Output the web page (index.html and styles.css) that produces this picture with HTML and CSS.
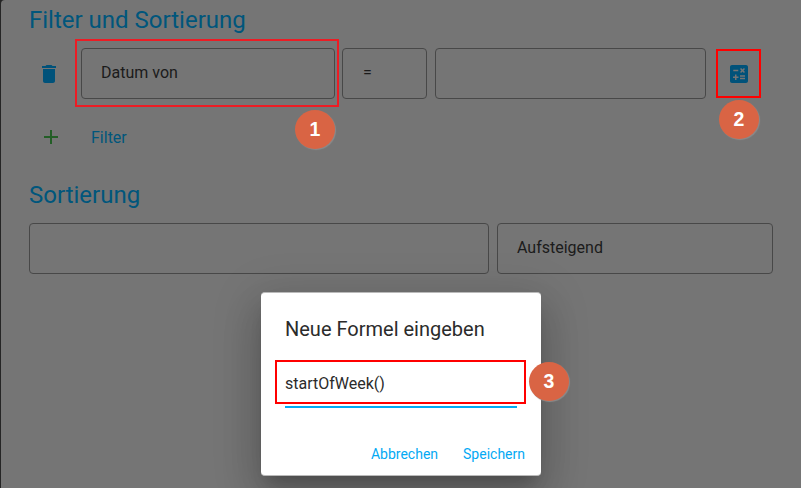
FILE: index.html
```html
<!DOCTYPE html>
<html lang="de">
<head>
<meta charset="utf-8">
<title>Filter und Sortierung</title>
<link rel="stylesheet" href="styles.css">
</head>
<body>
<main class="panel">
  <h2 class="heading">Filter und Sortierung</h2>
  <div class="filter-row">
    <svg class="icon trash" viewBox="0 0 24 24"><path d="M6 19c0 1.100.9 2 2 2h8c1.100 0 2-.9 2-2V7H6v12zM19 4h-3.500l-1-1h-5l-1 1H5v2h14V4z"/></svg>
    <div class="field column">Datum von</div>
    <div class="field operator">=</div>
    <div class="field value"></div>
    <svg class="icon calc" viewBox="0 0 24 24"><path fill-rule="evenodd" d="M19 3H5c-1.100 0-2 .9-2 2v14c0 1.100.9 2 2 2h14c1.100 0 2-.9 2-2V5c0-1.100-.9-2-2-2zM13.030 7.060L14.090 6l1.410 1.410L16.910 6l1.060 1.060-1.410 1.410 1.410 1.410-1.060 1.060-1.410-1.400-1.410 1.410-1.060-1.060 1.410-1.410-1.410-1.420zM6.250 7.720h5v1.500h-5v-1.500zM11.500 16h-2v2H8v-2H6v-1.500h2v-2h1.500v2h2V16zM18 17.250h-5v-1.500h5v1.500zM18 14.750h-5v-1.500h5v1.500z"/></svg>
  </div>
  <div class="add-row">
    <svg class="icon plus" viewBox="0 0 24 24"><path d="M19 13h-6v6h-2v-6H5v-2h6V5h2v6h6v2z"/></svg>
    <span class="add-label">Filter</span>
  </div>
  <h2 class="heading">Sortierung</h2>
  <div class="sort-row">
    <div class="field sort-column"></div>
    <div class="field direction">Aufsteigend</div>
  </div>
</main>

<section class="dialog" role="dialog">
  <h3 class="dialog-title">Neue Formel eingeben</h3>
  <div class="formula">startOfWeek()</div>
  <div class="actions"><span>Abbrechen</span><span>Speichern</span></div>
</section>

<div class="mark mark-1"></div>
<div class="mark mark-2"></div>
<div class="mark mark-3"></div>
<div class="badge badge-1">1</div>
<div class="badge badge-2">2</div>
<div class="badge badge-3">3</div>
</body>
</html>
```
FILE: styles.css
```css
* { box-sizing: border-box; }
body {
  margin: 0;
  height: 488px;
  overflow: hidden;
  position: relative;
  padding-left: 1px;
  background: #252525;
  font-family: Roboto, "Liberation Sans", sans-serif;
  font-size: 16px;
  color: #1b1b1b;
}
.panel {
  height: 488px;
  padding: 4px 28px 0;
  background: #757575;
  border-top-left-radius: 4px;
}
.heading {
  margin: 0;
  font-size: 24px;
  line-height: 32px;
  font-weight: 400;
  color: #00567c;
}
.icon { width: 24px; height: 24px; fill: #00527a; flex: none; }
.filter-row { display: flex; align-items: center; margin-top: 12px; padding-left: 8px; }
.field {
  height: 51px;
  padding: 0 19px;
  border: 1px solid #484848;
  border-radius: 4px;
  line-height: 47px;
}
.column { width: 254px; margin-left: 20px; }
.operator { width: 85px; margin-left: 7px; padding-left: 20px; }
.value { width: 271px; margin-left: 8px; }
.calc { margin-left: 21px; }
.add-row { display: flex; align-items: center; height: 24px; margin-top: 26px; padding-left: 10px; }
.plus { fill: #235e26; }
.add-label { margin-left: 28px; color: #00567c; }
.add-row + .heading { margin-top: 30px; }
.sort-row { display: flex; gap: 8px; margin-top: 12px; }
.sort-column { width: 460px; }
.direction { width: 276px; }

.dialog {
  position: absolute;
  left: 261px;
  top: 292px;
  width: 280px;
  height: 184px;
  padding: 21px 24px 0;
  background: #fff;
  border-radius: 4px;
  border-top: 1px solid #bababa;
  border-bottom: 1px solid #bababa;
  box-shadow: 0 11px 15px -7px rgba(0,0,0,.2), 0 24px 38px 3px rgba(0,0,0,.14), 0 9px 46px 8px rgba(0,0,0,.12);
}
.dialog-title {
  margin: 0 0 15px;
  font-size: 20px;
  line-height: 30px;
  font-weight: 400;
  color: #2b2b2b;
  white-space: nowrap;
}
.formula {
  height: 49px;
  line-height: 50px;
  border-bottom: 2px solid #03a9f4;
  color: #2b2b2b;
}
.actions {
  display: flex;
  justify-content: flex-end;
  gap: 25px;
  margin: 35px -8px 0 0;
  font-size: 14px;
  line-height: 22px;
  color: #03a9f4;
}

.mark { position: absolute; border: 2px solid #f00; }
.mark-1 { left: 75px; top: 39px; width: 264px; height: 68px; border-color: #ed1c24; }
.mark-2 { left: 716px; top: 49px; width: 45px; height: 49px; }
.mark-3 { left: 275px; top: 360px; width: 251px; height: 44px; }
.badge {
  position: absolute;
  width: 40px;
  height: 39px;
  border-radius: 50%;
  background: #d96444;
  box-shadow: 1px 1px 1px #8b8b8b;
  color: #fff;
  font: 700 19.500px/38px "Liberation Sans", Arial, sans-serif;
  text-align: center;
}
.badge-1 { left: 295px; top: 110px; }
.badge-2 { left: 719px; top: 100px; }
.badge-3 { left: 529px; top: 362px; }
```
